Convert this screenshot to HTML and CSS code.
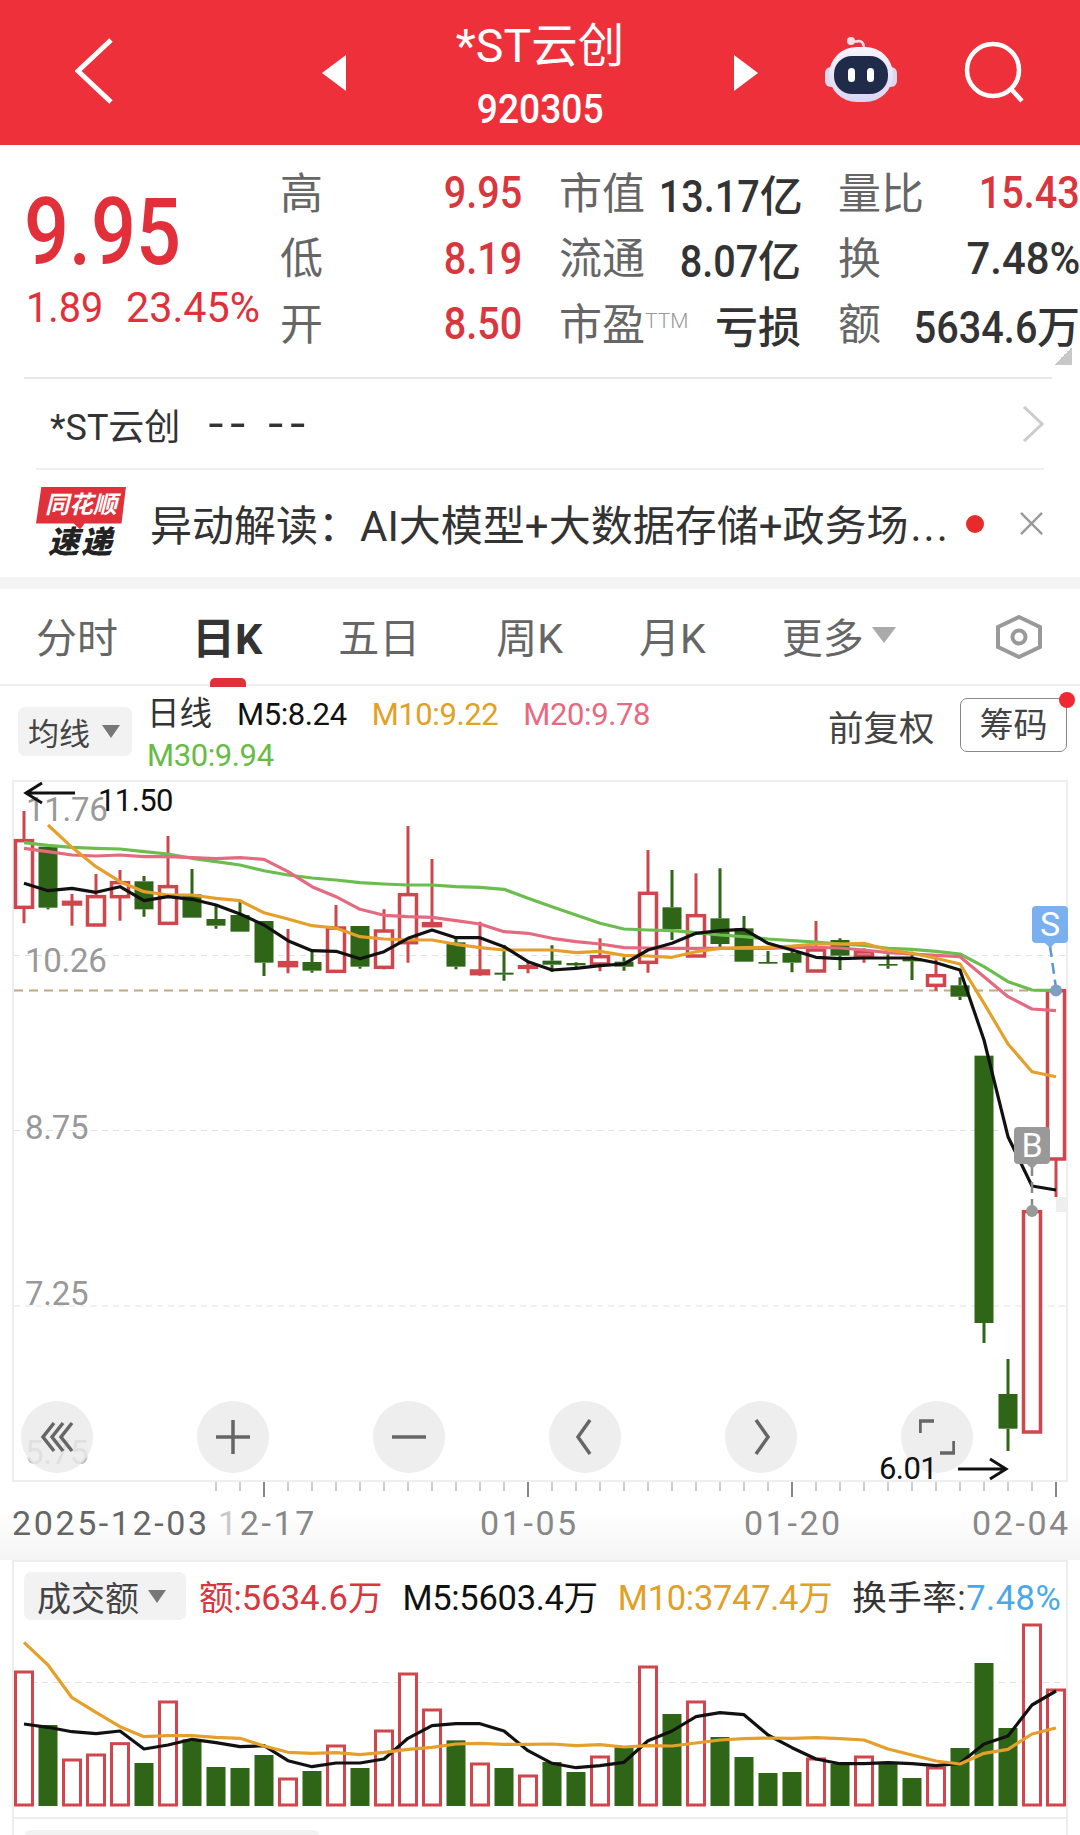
FILE: index.html
```html
<!DOCTYPE html>
<html lang="zh-CN">
<head>
  <meta charset="UTF-8">
  <meta name="viewport" content="width=device-width, initial-scale=1.0">
  <title>*ST云创 920305</title>
  <link rel="stylesheet" href="styles.css">
</head>
<body>
  <header class="top-bar">
    <svg class="back-icon" viewBox="0 0 40 70"><path d="M36 4 3 35 36 66" /></svg>
    <div class="title-wrap">
      <svg class="switch-arrow" viewBox="0 0 24 36"><path d="M24 0 0 18 24 36Z" /></svg>
      <div class="title-text">
        <div class="stock-name">*ST云创</div>
        <div class="stock-code">920305</div>
      </div>
      <svg class="switch-arrow" viewBox="0 0 24 36"><path d="M0 0 24 18 0 36Z" /></svg>
    </div>
    <svg class="robot-icon" viewBox="0 0 76 66">
      <defs>
        <linearGradient id="robotHead" x1="0" y1="0" x2="0" y2="1">
          <stop offset="0" stop-color="#f8f4fb" />
          <stop offset="1" stop-color="#d9d6f4" />
        </linearGradient>
      </defs>
      <path d="M28 4q5 1 8 0 4 0 5 6" fill="none" stroke="#f3dfe8" stroke-width="2.5" />
      <circle cx="28" cy="4" r="4" fill="#f3dfe8" />
      <rect x="2" y="30" width="72" height="20" rx="6" fill="#dcd8f2" />
      <rect x="6" y="10" width="64" height="55" rx="28" fill="url(#robotHead)" />
      <rect x="11" y="19" width="54" height="38" rx="18" fill="#1f2b49" />
      <rect x="25" y="31" width="7" height="14" rx="3.5" fill="#fff" />
      <rect x="44" y="31" width="7" height="14" rx="3.5" fill="#fff" />
    </svg>
    <svg class="search-icon" viewBox="0 0 62 62">
      <circle cx="29" cy="29" r="26" />
      <path d="M47 48 58 60" />
    </svg>
  </header>

  <section class="quote">
    <div class="quote-inner">
      <div class="price-block">
        <div class="price-now">9.95</div>
        <div class="price-change"><span>1.89</span><span class="change-pct">23.45%</span></div>
      </div>
      <div class="quote-grid">
        <div class="cell"><span class="cell-label">高</span><span class="cell-value up"><span class="num">9.95</span></span></div>
        <div class="cell"><span class="cell-label">市值</span><span class="cell-value"><span class="num">13.17</span>亿</span></div>
        <div class="cell"><span class="cell-label">量比</span><span class="cell-value up"><span class="num">15.43</span></span></div>
        <div class="cell"><span class="cell-label">低</span><span class="cell-value up"><span class="num">8.19</span></span></div>
        <div class="cell"><span class="cell-label">流通</span><span class="cell-value"><span class="num">8.07</span>亿</span></div>
        <div class="cell"><span class="cell-label">换</span><span class="cell-value"><span class="num num-wide">7.48%</span></span></div>
        <div class="cell"><span class="cell-label">开</span><span class="cell-value up"><span class="num">8.50</span></span></div>
        <div class="cell"><span class="cell-label">市盈<sup class="ttm">TTM</sup></span><span class="cell-value">亏损</span></div>
        <div class="cell"><span class="cell-label">额</span><span class="cell-value"><span class="num">5634.6</span>万</span></div>
      </div>
      <div class="corner-mark"></div>
    </div>
  </section>

  <section class="notice-row">
    <div class="notice-inner">
      <span class="notice-name">*ST云创</span>
      <span class="dashes">--</span>
      <span class="dashes">--</span>
      <svg class="row-chevron" viewBox="0 0 22 36"><path d="M2 1 20 18 2 35" /></svg>
    </div>
  </section>

  <section class="news-row">
    <div class="news-logo">
      <div class="logo-bubble">同花顺</div>
      <div class="logo-word">速递</div>
    </div>
    <div class="news-text">异动解读：AI大模型+大数据存储+政务场<span class="news-more">...</span></div>
    <span class="news-dot"></span>
    <svg class="news-close" viewBox="0 0 24 24"><path d="M1 1 23 23M23 1 1 23" /></svg>
  </section>

  <div class="band"></div>

  <nav class="tabs">
    <span class="tab">分时</span>
    <span class="tab tab-active">日K</span>
    <span class="tab">五日</span>
    <span class="tab">周K</span>
    <span class="tab">月K</span>
    <span class="tab tab-more">更多<i class="caret caret-light"></i></span>
    <svg class="tab-setting" viewBox="0 0 48 44">
      <path d="M24 2 45 12V32L24 42 3 32V12Z" />
      <circle cx="24" cy="22" r="6.5" />
    </svg>
  </nav>

  <section class="ma-bar">
    <div class="chip chip-ma">均线<i class="caret"></i></div>
    <div class="ma-values">
      <span class="ma-name">日线</span>
      <span class="c-black">M5:8.24</span>
      <span class="c-orange">M10:9.22</span>
      <span class="c-pink">M20:9.78</span>
      <span class="c-green">M30:9.94</span>
    </div>
    <span class="adjust">前复权</span>
    <span class="chips-btn">筹码</span>
  </section>

  <section class="price-panel">
    <svg id="priceChart" class="price-svg" viewBox="14 782 1052 698">
      <path class="grid-line" d="M14 955.5H1066M14 1130.5H1066M14 1306H1066" />
      <path class="last-line" d="M14 990.5H1066" />
      <rect x="1056" y="1197" width="12" height="15" fill="#eee" />
      <text class="axis-price" x="26" y="821">11.76</text>
      <text class="axis-price" x="25" y="972">10.26</text>
      <text class="axis-price" x="25" y="1139">8.75</text>
      <text class="axis-price" x="25" y="1305">7.25</text>
      <text class="axis-price axis-fade" x="25" y="1464">5.75</text>
    </svg>
    <svg class="price-notes" viewBox="14 782 1052 698">
      <path class="note-arrow" d="M75 793H26M42 783 26 793 42 803" />
      <text class="note-text" x="98" y="811">11.50</text>
      <path class="note-arrow" d="M958 1469H1006M990 1459 1006 1469 990 1479" />
      <text class="note-text" x="879" y="1479">6.01</text>

      <path class="mark-line mark-s" d="M1050 946 1056 988" />
      <circle cx="1056" cy="990.5" r="6" fill="#7f9fc4" />
      <path d="M1044 942H1056L1050 948Z" fill="#7ab0ee" />
      <rect x="1032" y="906" width="36" height="37" rx="4" fill="#7ab0ee" />
      <text class="mark-text" x="1050" y="936">S</text>

      <path class="mark-line mark-b" d="M1032 1165V1208" />
      <circle cx="1032" cy="1211" r="6" fill="#999" />
      <path d="M1026 1163H1038L1032 1169Z" fill="#999" />
      <rect x="1014" y="1127" width="36" height="37" rx="4" fill="#999" />
      <text class="mark-text" x="1032" y="1157">B</text>
    </svg>
    <div class="chart-buttons">
      <button class="round-btn"><svg viewBox="0 0 36 36"><path d="M15 4 4 18 15 32M24 4 13 18 24 32M33 4 22 18 33 32" /></svg></button>
      <button class="round-btn"><svg viewBox="0 0 36 36"><path d="M1 18H35M18 1V35" /></svg></button>
      <button class="round-btn"><svg viewBox="0 0 36 36"><path d="M1 18H35" /></svg></button>
      <button class="round-btn"><svg viewBox="0 0 36 36"><path d="M23 1 11 18 23 35" /></svg></button>
      <button class="round-btn"><svg viewBox="0 0 36 36"><path d="M13 1 25 18 13 35" /></svg></button>
      <button class="round-btn"><svg viewBox="0 0 36 36"><path d="M1 14V2H15M35 22V34H21" /></svg></button>
    </div>
  </section>

  <section class="date-axis">
    <svg id="dateAxis" class="date-svg" viewBox="0 0 1080 78">
      <text class="date-first" x="12" y="53">2025-12-03</text>
      <text class="date-label" x="218" y="53"><tspan class="date-fade">1</tspan>2-17</text>
      <text class="date-label" x="480" y="53">01-05</text>
      <text class="date-label" x="744" y="53">01-20</text>
      <text class="date-label" x="972" y="53">02-04</text>
    </svg>
  </section>

  <section class="volume-panel">
    <div class="volume-head">
      <div class="chip chip-vol">成交额<i class="caret"></i></div>
      <span class="c-red">额:5634.6万</span>
      <span class="c-black tight">M5:5603.4万</span>
      <span class="c-orange tight">M10:3747.4万</span>
      <span class="c-dark turnover">换手率:<span class="c-blue">7.48%</span></span>
    </div>
    <svg id="volumeChart" class="volume-svg" viewBox="14 1620 1052 197">
      <path class="grid-line" d="M20 1682.5H1062" />
    </svg>
  </section>

  <div class="next-panel"><div class="next-chip"></div></div>

  <script src="chart.js"></script>
</body>
</html>
```

FILE: styles.css
```css
* {
  box-sizing: border-box;
}

html,
body {
  margin: 0;
  padding: 0;
}

body {
  width: 1080px;
  height: 1835px;
  overflow: hidden;
  background: #fff;
  color: #333;
  font-family: Roboto, "Noto Sans CJK SC", sans-serif;
}

/* top red bar */
.top-bar {
  position: relative;
  height: 145px;
  background: #ee303b;
  color: #fff;
}

.back-icon {
  position: absolute;
  left: 75px;
  top: 36px;
  width: 40px;
  height: 70px;
}

.back-icon path {
  fill: none;
  stroke: #fff;
  stroke-width: 5;
}

.title-wrap {
  position: absolute;
  left: 322px;
  top: 0;
  width: 436px;
  height: 145px;
  display: flex;
  align-items: center;
  justify-content: space-between;
}

.switch-arrow {
  width: 24px;
  height: 36px;
  fill: #fff;
}

.title-text {
  align-self: flex-start;
  margin-top: 16px;
  text-align: center;
}

.stock-name {
  font-size: 46.5px;
  line-height: 60px;
}

.stock-code {
  font-size: 40px;
  line-height: 68px;
  font-weight: 500;
  transform: scaleX(0.93);
}

.robot-icon {
  position: absolute;
  left: 823px;
  top: 37px;
  width: 76px;
  height: 66px;
}

.search-icon {
  position: absolute;
  left: 964px;
  top: 41px;
  width: 62px;
  height: 62px;
  fill: none;
  stroke: #fff;
  stroke-width: 4.5;
}

/* quote block */
.quote {
  height: 234px;
  padding: 0 28px 0 24px;
}

.quote-inner {
  position: relative;
  height: 234px;
  border-bottom: 2px solid #e8e8e8;
}

.price-block {
  position: absolute;
  left: 0;
  top: 38px;
  color: #e1303a;
}

.price-now {
  font-size: 92px;
  line-height: 100px;
  font-weight: 500;
  transform: scaleX(0.86);
  transform-origin: left center;
}

.price-change {
  display: flex;
  gap: 16px;
  padding-left: 2px;
  font-size: 43px;
  line-height: 46px;
  margin-top: 1px;
}

.price-change span {
  transform: scaleX(0.92);
  transform-origin: left center;
}

.price-change .change-pct {
  transform: scaleX(0.96);
}

.quote-grid {
  position: absolute;
  left: 256px;
  top: 16px;
  display: grid;
  grid-template-columns: repeat(3, 240px);
  grid-auto-rows: 65.5px;
  column-gap: 39px;
}

.cell {
  display: flex;
  justify-content: space-between;
  align-items: center;
}

.cell-label {
  font-size: 43px;
  color: #666;
  white-space: nowrap;
  margin-top: -8px;
}

.cell-value {
  font-size: 43px;
  font-weight: 500;
  color: #333;
  white-space: nowrap;
  margin: -2px -2px 0 0;
}

.cell-value .num {
  display: inline-block;
  font-size: 45px;
  transform: scaleX(0.88);
  transform-origin: right center;
}

.cell-value .num-wide {
  transform: scaleX(0.93);
}

.cell-value.up {
  color: #d9363e;
}

.ttm {
  font-size: 21px;
  font-weight: 300;
  color: #999;
  vertical-align: 12px;
  line-height: 0;
}

.corner-mark {
  position: absolute;
  right: -20px;
  top: 202px;
  width: 18px;
  height: 18px;
  background: linear-gradient(135deg, transparent 50%, #c8c8c8 50%);
}

/* stock notice row */
.notice-row {
  height: 91px;
  padding: 0 36px;
}

.notice-inner {
  height: 91px;
  display: flex;
  align-items: center;
  padding-left: 14px;
  color: #333;
  border-bottom: 2px solid #efefef;
}

.notice-name {
  font-size: 36px;
  margin-right: 28px;
}

.dashes {
  font-size: 54px;
  line-height: 50px;
  letter-spacing: 7px;
  margin-right: 16px;
  transform: scaleY(0.85);
}

.row-chevron {
  margin-left: auto;
  width: 22px;
  height: 36px;
  fill: none;
  stroke: #ccc;
  stroke-width: 3;
}

/* news row */
.news-row {
  height: 107px;
  display: flex;
  align-items: center;
  padding-left: 36px;
}

.news-logo {
  width: 90px;
  flex: none;
  text-align: center;
}

.logo-bubble {
  width: 90px;
  height: 43px;
  background: #e0303a;
  clip-path: polygon(6% 0, 100% 0, 95% 86%, 54% 86%, 49% 100%, 42% 86%, 0 86%);
  color: #fff;
  font-size: 24px;
  line-height: 37px;
  font-weight: 700;
  font-style: italic;
}

.logo-word {
  margin-top: -5px;
  font-size: 31px;
  line-height: 36px;
  font-weight: 900;
  font-style: italic;
  color: #222;
  letter-spacing: 2px;
}

.news-text {
  margin: -3px 0 0 24px;
  width: 798px;
  font-size: 42px;
  color: #333;
  white-space: nowrap;
}

.news-more {
  letter-spacing: 2px;
  margin-left: 2px;
}

.news-dot {
  width: 18px;
  height: 18px;
  margin-left: 18px;
  border-radius: 50%;
  background: #e62b2b;
  flex: none;
}

.news-close {
  width: 23px;
  height: 23px;
  margin-left: 36px;
  fill: none;
  stroke: #999;
  stroke-width: 2.5;
}

.band {
  height: 12px;
  background: #f4f4f4;
}

/* period tabs */
.tabs {
  position: relative;
  height: 97px;
  display: flex;
  align-items: center;
  padding: 0 37px 4px 36px;
  gap: 76px;
  border-bottom: 2px solid #eee;
}

.tab {
  position: relative;
  font-size: 41px;
  color: #666;
  white-space: nowrap;
}

.tab-active {
  font-size: 43px;
  font-weight: 700;
  color: #333;
  margin: 0 0 0 -2px;
}

.tab-active::after {
  content: "";
  position: absolute;
  left: 18px;
  bottom: -21px;
  width: 36px;
  height: 9px;
  border-radius: 5px 5px 0 0;
  background: #e0303a;
}

.tab-more {
  display: flex;
  align-items: center;
  gap: 8px;
}

.caret {
  display: inline-block;
  flex: none;
  width: 0;
  height: 0;
  border-left: 9px solid transparent;
  border-right: 9px solid transparent;
  border-top: 13px solid #777;
}

.caret-light {
  border-left-width: 12px;
  border-right-width: 12px;
  border-top: 16px solid #aaa;
}

.tab-setting {
  position: absolute;
  left: 995px;
  top: 26px;
  width: 48px;
  height: 44px;
  fill: none;
  stroke: #999;
  stroke-width: 4;
}

/* moving average bar */
.ma-bar {
  position: relative;
  height: 94px;
  display: flex;
  align-items: center;
  padding-left: 18px;
}

.chip {
  display: flex;
  flex: none;
  align-items: center;
  background: #f2f2f2;
  border-radius: 7px;
  color: #444;
}

.chip-ma {
  width: 114px;
  height: 49px;
  padding-left: 10px;
  gap: 12px;
  font-size: 31px;
  margin-bottom: 3px;
}

.ma-values {
  display: flex;
  flex-wrap: wrap;
  align-items: center;
  width: 530px;
  margin-left: 15px;
  column-gap: 25px;
  font-size: 31px;
  line-height: 41px;
  letter-spacing: -0.4px;
  margin-top: 3px;
}

.ma-name {
  font-size: 32.5px;
  letter-spacing: 0;
  color: #333;
}

.c-black {
  color: #111;
}

.c-orange {
  color: #e3a026;
}

.c-pink {
  color: #e66a80;
}

.c-green {
  color: #68bb45;
}

.c-red {
  color: #d9363e;
}

.c-dark {
  color: #333;
}

.c-blue {
  color: #4aa8e8;
}

.adjust {
  position: absolute;
  left: 828px;
  top: 21px;
  font-size: 35.5px;
  line-height: 44px;
  color: #444;
}

.chips-btn {
  position: absolute;
  left: 960px;
  top: 12px;
  width: 107px;
  height: 54px;
  border: 1.5px solid #888;
  border-radius: 7px;
  font-size: 34px;
  line-height: 53px;
  text-align: center;
  color: #444;
}

.chips-btn::after {
  content: "";
  position: absolute;
  right: -9px;
  top: -7px;
  width: 16px;
  height: 16px;
  border-radius: 50%;
  background: #ee2a33;
}

/* price chart */
.price-panel {
  position: relative;
  width: 1056px;
  height: 702px;
  margin-left: 12px;
  border: 2px solid #eee;
}

.price-svg,
.price-notes {
  position: absolute;
  left: 0;
  top: 0;
  width: 1052px;
  height: 698px;
  overflow: visible;
}

.price-notes {
  z-index: 2;
}

.grid-line {
  fill: none;
  stroke: #e2e2e2;
  stroke-width: 1.2;
  stroke-dasharray: 6 5;
}

.last-line {
  fill: none;
  stroke: #c0a882;
  stroke-width: 2;
  stroke-dasharray: 9 6;
}

.axis-price {
  font-size: 33px;
  letter-spacing: -0.3px;
  fill: #999;
}

.axis-fade {
  fill: #bbb;
}

.note-arrow {
  fill: none;
  stroke: #111;
  stroke-width: 3;
}

.note-text {
  font-size: 31px;
  letter-spacing: -0.6px;
  fill: #111;
}

.mark-line {
  fill: none;
  stroke-width: 2.5;
  stroke-dasharray: 11 6;
}

.mark-s {
  stroke: #5b96d6;
}

.mark-b {
  stroke: #888;
}

.mark-text {
  font-size: 34px;
  fill: #fff;
  text-anchor: middle;
}

.chart-buttons {
  position: absolute;
  left: 7px;
  top: 619px;
  z-index: 1;
  display: flex;
  gap: 104px;
}

.round-btn {
  width: 72px;
  height: 72px;
  padding: 18px;
  border: none;
  border-radius: 50%;
  background: rgba(234, 234, 234, 0.8);
}

.round-btn svg {
  display: block;
  width: 36px;
  height: 36px;
  fill: none;
  stroke: #666;
  stroke-width: 3.5;
}

/* date axis under the chart */
.date-axis {
  height: 78px;
  background: linear-gradient(#fff 35%, #f5f5f5);
}

.date-svg {
  display: block;
  width: 1080px;
  height: 78px;
}

.date-first,
.date-label {
  font-size: 34px;
  letter-spacing: 2.6px;
}

.date-first {
  fill: #666;
}

.date-label {
  fill: #888;
}

.date-fade {
  fill: #c8c8c8;
}

/* volume chart */
.volume-panel {
  width: 1056px;
  height: 259px;
  margin-left: 12px;
  border: 2px solid #eee;
}

.volume-head {
  display: flex;
  align-items: center;
  height: 58px;
  padding: 8px 0 0 10px;
  font-size: 34.5px;
  white-space: nowrap;
}

.chip-vol {
  width: 162px;
  height: 48px;
  padding-left: 13px;
  gap: 9px;
  font-size: 34px;
  margin-right: 13px;
  margin-top: 2px;
}

.volume-head > span {
  margin-right: 20px;
}

.volume-head .tight {
  letter-spacing: -0.3px;
}

.volume-head .turnover {
  letter-spacing: 0.5px;
}

.volume-svg {
  display: block;
  width: 1052px;
  height: 197px;
  overflow: visible;
}

.next-panel {
  height: 16px;
  margin-left: 12px;
  width: 1056px;
  border-left: 2px solid #eee;
  border-right: 2px solid #eee;
  padding: 11px 0 0 10px;
  overflow: hidden;
}

.next-chip {
  width: 296px;
  height: 30px;
  background: #f2f2f2;
  border-radius: 7px;
}
```

FILE: chart.js
```js
// Series values are stored in third-pixel steps and offset from the panel origin.
const priceY = v => 770 + v / 3;
const volumeY = v => 1590 + v / 3;
const slotX = i => 24 + 24 * i;

// [kind, bodyTop, bodyBottom, high, low]; u = up candle, d = down candle
const candles = [
  ['u', 212, 412, 123, 460], ['d', 230, 413, 230, 418], ['u', 397, 402, 372, 467], ['u', 380, 465, 312, 467],
  ['u', 338, 380, 300, 452], ['d', 334, 418, 318, 440], ['u', 350, 460, 198, 460], ['d', 373, 443, 297, 443],
  ['d', 447, 467, 405, 476], ['d', 435, 485, 395, 485], ['d', 453, 578, 453, 618], ['u', 578, 587, 477, 610],
  ['d', 576, 602, 540, 608], ['u', 474, 604, 405, 604], ['d', 468, 590, 468, 596], ['u', 483, 592, 418, 598],
  ['u', 374, 518, 168, 578], ['u', 461, 467, 267, 470], ['d', 517, 590, 505, 598], ['u', 603, 611, 455, 617],
  ['d', 608, 614, 525, 632], ['u', 590, 592, 575, 610], ['d', 572, 584, 526, 606], ['d', 579, 586, 577, 598],
  ['u', 560, 582, 505, 604], ['d', 575, 590, 562, 602], ['u', 370, 577, 240, 608], ['d', 412, 478, 300, 510],
  ['u', 437, 558, 310, 558], ['d', 445, 522, 295, 532], ['d', 475, 575, 438, 575], ['d', 576, 581, 543, 582],
  ['d', 549, 578, 530, 607], ['u', 540, 603, 453, 606], ['d', 510, 557, 505, 600], ['u', 546, 558, 535, 578],
  ['d', 582, 587, 553, 596], ['d', 565, 574, 545, 630], ['u', 617, 646, 565, 662], ['d', 646, 680, 622, 690],
  ['d', 857, 1659, 857, 1719], ['d', 1872, 1976, 1767, 2043], ['u', 1325, 1986, 1325, 1986], ['u', 662, 1167, 662, 1281]
];

const priceLines = [
  {
    color: '#6cbd4f',
    from: 0,
    values: [218, 226, 232, 235, 237, 245, 252, 265, 275, 285, 302, 315, 324, 330, 338, 342, 345, 345, 350, 352, 358, 385,
      410, 435, 460, 477, 480, 482, 488, 495, 500, 507, 512, 516, 522, 526, 535, 538, 544, 552, 590, 635, 660, 662]
  },
  {
    color: '#e5697f',
    from: 0,
    values: [235, 245, 255, 258, 255, 260, 260, 263, 266, 263, 268, 305, 350, 380, 418, 436, 440, 442, 452, 462, 485, 490,
      505, 515, 522, 533, 534, 535, 535, 535, 535, 535, 532, 532, 534, 540, 548, 552, 556, 560, 620, 680, 717, 722]
  },
  {
    color: '#e5a02c',
    from: 1,
    values: [165, 232, 290, 335, 365, 375, 375, 385, 392, 428, 447, 467, 474, 500, 507, 510, 510, 523, 533, 540, 540,
      540, 548, 544, 556, 558, 562, 545, 535, 533, 532, 528, 522, 522, 520, 540, 550, 565, 582, 700, 822, 905, 920]
  },
  {
    color: '#111',
    from: 0,
    values: [340, 362, 355, 367, 350, 392, 380, 388, 405, 432, 465, 512, 542, 544, 566, 545, 505, 480, 503, 503, 530, 575,
      600, 595, 587, 582, 540, 520, 490, 482, 478, 520, 540, 562, 566, 564, 564, 564, 578, 600, 810, 1100, 1248, 1260]
  }
];

// [kind, top]; every bar stands on the same baseline
const volumes = [
  ['u', 246], ['d', 405], ['u', 510], ['u', 495], ['u', 461], ['d', 519], ['u', 336], ['d', 448], ['d', 531], ['d', 534], ['d', 495],
  ['u', 567], ['d', 543], ['u', 468], ['d', 534], ['u', 423], ['u', 252], ['u', 360], ['d', 451], ['u', 522], ['d', 534], ['u', 558],
  ['d', 516], ['d', 546], ['u', 501], ['d', 472], ['u', 231], ['d', 372], ['u', 336], ['d', 441], ['d', 501], ['d', 549], ['d', 546],
  ['u', 507], ['d', 522], ['u', 501], ['d', 522], ['d', 564], ['u', 534], ['d', 474], ['d', 219], ['d', 414], ['u', 105], ['u', 300]
];

const volumeLines = [
  {
    color: '#111',
    from: 0,
    values: [402, 412, 425, 431, 423, 477, 465, 448, 458, 470, 467, 512, 530, 519, 519, 507, 445, 407, 401, 401, 423, 482,
      520, 533, 527, 517, 452, 423, 380, 368, 374, 435, 473, 507, 521, 521, 518, 521, 527, 520, 462, 438, 345, 303]
  },
  {
    color: '#e5a02c',
    from: 0,
    values: [157, 225, 323, 367, 410, 440, 437, 437, 442, 445, 468, 487, 490, 488, 494, 487, 478, 472, 462, 460, 463, 463,
      462, 467, 464, 471, 467, 468, 459, 450, 446, 444, 445, 443, 446, 450, 477, 495, 513, 522, 490, 478, 432, 414]
  }
];

const RED = '#cf464d';
const GREEN = '#2f6517';
const SVG_NS = 'http://www.w3.org/2000/svg';

function add(parent, tag, attrs) {
  const el = document.createElementNS(SVG_NS, tag);
  Object.keys(attrs).forEach(key => el.setAttribute(key, attrs[key]));
  parent.appendChild(el);
  return el;
}

function drawLine(svg, line, toY) {
  const points = line.values.map((v, i) => slotX(i + line.from) + ',' + toY(v).toFixed(1));
  add(svg, 'polyline', {
    points: points.join(' '),
    fill: 'none',
    stroke: line.color,
    'stroke-width': 3.2,
    'stroke-linejoin': 'round'
  });
}

function drawCandles(svg) {
  candles.forEach((c, i) => {
    const x = slotX(i);
    const top = priceY(c[1]);
    const bottom = priceY(c[2]);
    const color = c[0] === 'u' ? RED : GREEN;
    add(svg, 'path', {
      d: `M${x} ${priceY(c[3])}V${top}M${x} ${bottom}V${priceY(c[4])}`,
      stroke: color,
      'stroke-width': 3,
      fill: 'none'
    });
    if (c[0] === 'u') {
      add(svg, 'rect', { x: x - 8.5, y: top, width: 17, height: bottom - top, fill: '#fff', stroke: color, 'stroke-width': 3.5 });
    } else {
      add(svg, 'rect', { x: x - 9.5, y: top, width: 19, height: bottom - top, fill: color });
    }
  });
}

function drawVolumes(svg) {
  const base = volumeY(648);
  volumes.forEach((bar, i) => {
    const x = slotX(i);
    const top = volumeY(bar[1]);
    if (bar[0] === 'u') {
      add(svg, 'rect', { x: x - 8.5, y: top, width: 17, height: base - top - 1, fill: '#fff', stroke: RED, 'stroke-width': 3 });
    } else {
      add(svg, 'rect', { x: x - 9.5, y: top, width: 19, height: base - top, fill: GREEN });
    }
  });
}

function drawTicks(svg) {
  for (let i = 8; i < 44; i++) {
    const major = (i - 10) % 11 === 0;
    add(svg, 'line', {
      x1: slotX(i),
      x2: slotX(i),
      y1: 0,
      y2: major ? 15 : 9,
      stroke: major ? '#888' : '#bbb',
      'stroke-width': major ? 2 : 1.5
    });
  }
}

const priceChart = document.getElementById('priceChart');
drawCandles(priceChart);
priceLines.forEach(line => drawLine(priceChart, line, priceY));

const volumeChart = document.getElementById('volumeChart');
drawVolumes(volumeChart);
volumeLines.forEach(line => drawLine(volumeChart, line, volumeY));

drawTicks(document.getElementById('dateAxis'));
```
